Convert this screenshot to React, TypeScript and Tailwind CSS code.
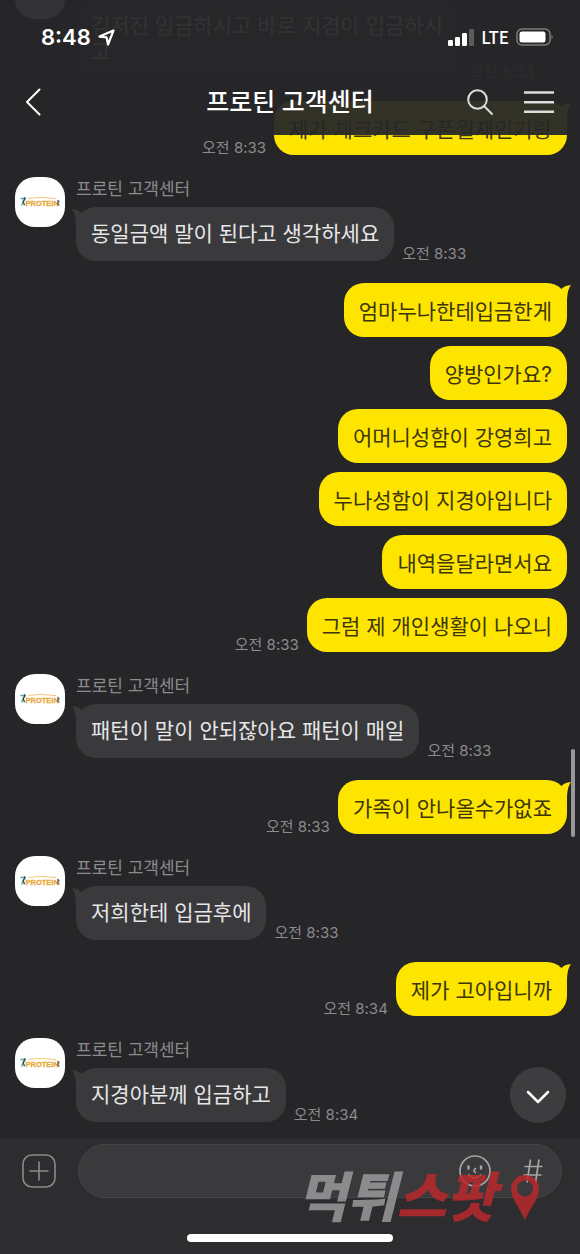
import { ChevronDown } from 'lucide-react';

type Group = {
    from: 'them' | 'me';
    texts: string[];
    time: string;
};

const SENDER = '프로틴 고객센터';

const groups: Group[] = [
    { from: 'them', texts: ['김저진 입금하시고 바로 지경아 입금하시고'], time: '오전 8:33' },
    { from: 'me', texts: ['제가 체크카드 구폰월재인기랑'], time: '오전 8:33' },
    { from: 'them', texts: ['동일금액 말이 된다고 생각하세요'], time: '오전 8:33' },
    {
        from: 'me',
        texts: [
            '엄마누나한테입금한게',
            '양방인가요?',
            '어머니성함이 강영희고',
            '누나성함이 지경아입니다',
            '내역을달라면서요',
            '그럼 제 개인생활이 나오니',
        ],
        time: '오전 8:33',
    },
    { from: 'them', texts: ['패턴이 말이 안되잖아요 패턴이 매일'], time: '오전 8:33' },
    { from: 'me', texts: ['가족이 안나올수가없죠'], time: '오전 8:33' },
    { from: 'them', texts: ['저희한테 입금후에'], time: '오전 8:33' },
    { from: 'me', texts: ['제가 고아입니까'], time: '오전 8:34' },
    { from: 'them', texts: ['지경아분께 입금하고'], time: '오전 8:34' },
];

function Avatar() {
    return (
        <div className="flex size-[50px] shrink-0 items-center justify-center rounded-[20px] bg-white">
            <svg viewBox="0 0 42 14" className="w-[42px]" aria-hidden="true">
                <path d="M1.5 3.5H5.5L2.5 10.5" fill="none" stroke="#58a99c" strokeWidth="1.3" />
                <path d="M5.2 2.4l1 1.2-2 3 1.3 3.6" fill="none" stroke="#2c4a5c" strokeWidth="1.3" />
                <text x="6.5" y="10.5" fontSize="7.5" fontWeight="700" fill="#e9a93a" stroke="#e9a93a" strokeWidth="0.3" fontFamily="Liberation Sans, sans-serif">
                    PROTEIN
                </text>
                <path d="M9 3.4Q22 1.4 37 3.6" fill="none" stroke="#f2c879" strokeWidth="1" />
                <path d="M38.5 5l1.5 1.8-1.5 1.4 1.8 2.3" fill="none" stroke="#4c5f63" strokeWidth="1.2" />
            </svg>
        </div>
    );
}

function Time({ children }: { children: string }) {
    return <span className="shrink-0 text-[15px] leading-[14px] text-[#8b8b8e]">{children}</span>;
}

function Received({ group }: { group: Group }) {
    return (
        <div className="flex items-start gap-[11px] pl-[15px]">
            <Avatar />
            <div className="min-w-0">
                <p className="text-[17px] leading-6 text-[#8b8b8e]">{SENDER}</p>
                <div className="mt-1.5 flex items-end gap-2">
                    <div className="relative max-w-[386px] rounded-[20px] bg-[#3a3a3c] px-[15px] py-3.5 text-[21px] leading-[26px] text-[#e6e6e8]">
                        <svg viewBox="0 0 20 20" className="absolute top-0 -left-1 size-5 text-[#3a3a3c]" aria-hidden="true">
                            <path d="M0 2C4.5 2.5 7.5 3.5 9.5 6L12 10L8 20H4C4 12 3 6 0 2Z" fill="currentColor" />
                        </svg>
                        <span className="relative">{group.texts[0]}</span>
                    </div>
                    <Time>{group.time}</Time>
                </div>
            </div>
        </div>
    );
}

function Sent({ group }: { group: Group }) {
    return (
        <div className="flex items-end justify-end gap-2 pr-[13px]">
            <Time>{group.time}</Time>
            <div className="flex flex-col items-end gap-[9px]">
                {group.texts.map((text, i) => (
                    <div key={text} className="relative rounded-[20px] bg-[#fee500] px-[15px] pt-4 pb-3 text-[21px] leading-[26px] text-[#3d350c]">
                        {i === 0 && (
                            <svg viewBox="0 0 20 20" className="absolute top-0 -right-1 size-5 text-[#fee500]" aria-hidden="true">
                                <path d="M20 2C15.5 2.5 12.5 3.5 10.5 6L8 10L12 20H16C16 12 17 6 20 2Z" fill="currentColor" />
                            </svg>
                        )}
                        <span className="relative">{text}</span>
                    </div>
                ))}
            </div>
        </div>
    );
}

function StatusBar() {
    return (
        <div className="flex items-center justify-between pt-[23px] pr-[26px] pl-[41px]">
            <div className="flex items-center gap-[7px]">
                <span className="text-[22px] leading-7 font-semibold">8:48</span>
                <svg viewBox="0 0 17 17" className="size-[17px]" fill="none" stroke="currentColor" strokeWidth="2.2" strokeLinejoin="round" aria-hidden="true">
                    <path d="M15.5 1.5L1.5 7.6L8.6 8.4L10 15.5Z" />
                </svg>
            </div>
            <div className="flex items-center gap-[7px]">
                <svg viewBox="0 0 26 18" className="h-[18px] w-[26px]" fill="currentColor" aria-hidden="true">
                    <rect x="0" y="12" width="5" height="6" rx="1.3" />
                    <rect x="7" y="9" width="5" height="9" rx="1.3" />
                    <rect x="14" y="5" width="5" height="13" rx="1.3" />
                    <rect x="21" y="1" width="5" height="17" rx="1.3" opacity="0.25" />
                </svg>
                <span className="font-['Noto_Sans_CJK_KR',sans-serif] text-[17px] leading-7 font-medium">LTE</span>
                <svg viewBox="0 0 38 18" className="h-[18px] w-[38px]" aria-hidden="true">
                    <rect x="1" y="1" width="33" height="16" rx="5" fill="none" stroke="#7c7c7e" strokeWidth="1.5" />
                    <rect x="3.5" y="3.5" width="26" height="11" rx="2.5" fill="white" />
                    <path d="M35.5 6.5Q38 9 35.5 11.5Z" fill="#7c7c7e" />
                </svg>
            </div>
        </div>
    );
}

function Header() {
    return (
        <header className="absolute inset-x-0 top-0 z-10 bg-[#262628]/94 text-white">
            <StatusBar />
            <div className="mt-[33px] grid grid-cols-[1fr_auto_1fr] items-center px-[26px] pb-[15px]">
                <button type="button" aria-label="뒤로" className="justify-self-start">
                    <svg viewBox="1 0 16 28" className="h-7 w-4" fill="none" stroke="currentColor" strokeWidth="2" strokeLinecap="round" strokeLinejoin="round" aria-hidden="true">
                        <path d="M14.5 1.5L2 14L14.5 26.5" />
                    </svg>
                </button>
                <h1 className="text-[25px] leading-9 font-medium">{SENDER}</h1>
                <div className="flex items-center gap-[30px] justify-self-end">
                    <button type="button" aria-label="검색">
                        <svg viewBox="0 0 28 28" className="size-7" fill="none" stroke="#dcdcdc" strokeWidth="2" strokeLinecap="round" aria-hidden="true">
                            <circle cx="11.5" cy="11.5" r="9.3" />
                            <path d="M18.2 18.2L26 26" />
                        </svg>
                    </button>
                    <button type="button" aria-label="메뉴">
                        <svg viewBox="0 0 30 24" className="h-6 w-[30px]" stroke="#dcdcdc" strokeWidth="2.4" aria-hidden="true">
                            <path d="M0 2.5H30M0 12.2H30M0 21.8H30" />
                        </svg>
                    </button>
                </div>
            </div>
        </header>
    );
}

function Footer() {
    return (
        <footer className="relative flex flex-col items-center bg-[#2d2d2f] pt-1.5 pb-3">
            <div className="flex w-full items-center gap-[22px] pr-[18px] pl-[22px]">
                <button type="button" aria-label="추가">
                    <svg viewBox="0 0 34 34" className="size-[34px]" fill="none" stroke="#8a8a8c" strokeWidth="1.6" aria-hidden="true">
                        <rect x="1" y="1" width="32" height="32" rx="9" />
                        <path d="M17 7.5V26.5M7.5 17H26.5" />
                    </svg>
                </button>
                <div className="flex h-[54px] min-w-0 flex-1 items-center rounded-full border border-[#454547] bg-[#3a3a3c] pr-[18px] pl-6">
                    <input type="text" aria-label="메시지" className="min-w-0 flex-1 bg-transparent text-[21px] text-white outline-none" />
                    <button type="button" aria-label="이모티콘">
                        <svg viewBox="0 0 32 32" className="size-8" fill="none" stroke="#a5a5a7" strokeWidth="1.7" strokeLinecap="round" aria-hidden="true">
                            <circle cx="16" cy="16" r="15" />
                            <path d="M9.5 11.5v2M22 11.5v2" strokeWidth="2.4" />
                            <path d="M16.6 13.6Q13.6 15.2 16.4 17.6M10 20Q15.5 26 21.5 20" />
                        </svg>
                    </button>
                    <button type="button" aria-label="샵검색" className="ml-8">
                        <svg viewBox="0 0 20 24" className="h-6 w-5" fill="none" stroke="#a5a5a7" strokeWidth="1.7" aria-hidden="true">
                            <path d="M7.5 0.5L4 23.5M16 0.5L12.5 23.5M1.5 7.5H19.5M0.5 16H18.5" />
                        </svg>
                    </button>
                </div>
            </div>
            <div className="mt-9 h-2 w-[206px] rounded-full bg-white" />
            <div className="pointer-events-none absolute top-7 right-10 flex items-center">
                <p className="font-['Noto_Sans_CJK_KR',sans-serif] text-[54px] leading-[56px] font-black whitespace-nowrap italic">
                    <span className="text-[#9a9a9c]/85">먹튀</span>
                    <span className="text-[#b8292b]/85">스팟</span>
                </p>
                <svg viewBox="0 0 30 48" className="mt-2 ml-3.5 h-12 w-[30px]" aria-hidden="true">
                    <path
                        fillRule="evenodd"
                        d="M15 1C7 1 1 7 1 15C1 25 10 34 15 46C20 34 29 25 29 15C29 7 23 1 15 1ZM15 6.5A8 8 0 1 1 15 22.5A8 8 0 1 1 15 6.5Z"
                        fill="#b8292b"
                        fillOpacity="0.85"
                    />
                </svg>
            </div>
        </footer>
    );
}

export default function App() {
    return (
        <div className="relative flex h-screen flex-col overflow-hidden bg-[#262628] font-['Inter','Noto_Sans_CJK_KR',sans-serif]">
            <Header />
            <main className="relative flex min-h-0 flex-1 flex-col justify-end gap-[22px] overflow-hidden pb-4">
                {groups.map((group, i) =>
                    group.from === 'me' ? <Sent key={i} group={group} /> : <Received key={i} group={group} />,
                )}
                <div className="absolute right-[5px] bottom-[301px] h-[88px] w-1 rounded-full bg-[#98989a]" />
                <button
                    type="button"
                    aria-label="맨 아래로"
                    className="absolute right-3.5 bottom-[15px] flex size-14 items-center justify-center rounded-full bg-[#3d3d3f] text-white"
                >
                    <ChevronDown className="mt-1 size-10" strokeWidth={1.5} />
                </button>
            </main>
            <Footer />
        </div>
    );
}
